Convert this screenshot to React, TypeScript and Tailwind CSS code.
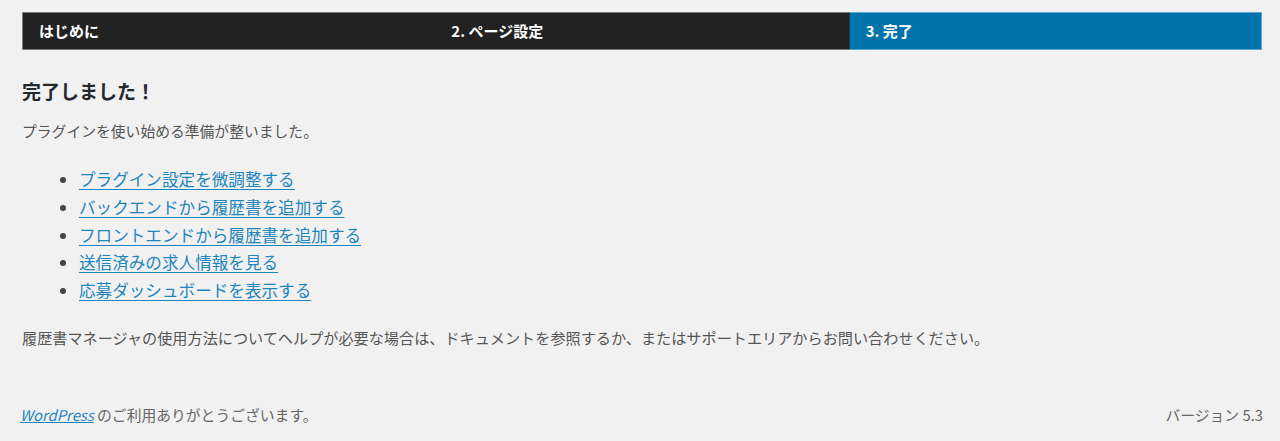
import React from "react";

const font = { fontFamily: '"Noto Sans CJK JP", "Noto Sans", sans-serif' };

export default function App() {
  const links = [
    "プラグイン設定を微調整する",
    "バックエンドから履歴書を追加する",
    "フロントエンドから履歴書を追加する",
    "送信済みの求人情報を見る",
    "応募ダッシュボードを表示する",
  ];
  return (
    <div className="w-[1280px] h-[441px] bg-[#f1f1f1] overflow-hidden" style={font}>
      <div className="pt-[12px] pl-[22px] pr-[18px]">
        <div className="grid grid-cols-3 h-[38px]">
          <div className="bg-[#222222] border-y border-l border-[#7a7a7a] flex items-center pl-[16px] text-white font-bold text-[15px]">
            はじめに
          </div>
          <div className="bg-[#222222] border-y border-[#7a7a7a] flex items-center pl-[16px] text-white font-bold text-[15px]">
            2. ページ設定
          </div>
          <div className="bg-[#0073aa] border border-[#5aa8d6] border-l-[#1a3a4a] flex items-center pl-[16px] text-white font-bold text-[15px]">
            3. 完了
          </div>
        </div>
        <h1 className="mt-[29px] text-[19px] leading-[24px] font-bold text-[#23282d]">完了しました！</h1>
        <p className="mt-[16px] text-[14.8px] leading-[24px] text-[#555]">プラグインを使い始める準備が整いました。</p>
        <ul className="mt-[23px] pl-[57px] list-disc marker:text-[#444]">
          {links.map((l) => (
            <li key={l} className="text-[16.6px] leading-[27.8px] text-[#444]">
              <a href="#" className="text-[#1f85bd] underline underline-offset-[3px]">{l}</a>
            </li>
          ))}
        </ul>
        <p className="mt-[20px] text-[15.15px] leading-[24px] text-[#555]">
          履歴書マネージャの使用方法についてヘルプが必要な場合は、ドキュメントを参照するか、またはサポートエリアからお問い合わせください。
        </p>
      </div>
      <div className="mt-[56px] pl-[20px] pr-[17px] flex justify-between text-[14.8px] leading-[20px] text-[#666]">
        <div>
          <a href="#" className="italic text-[#1f85bd] underline">WordPress</a> のご利用ありがとうございます。
        </div>
        <div>バージョン 5.3</div>
      </div>
    </div>
  );
}
